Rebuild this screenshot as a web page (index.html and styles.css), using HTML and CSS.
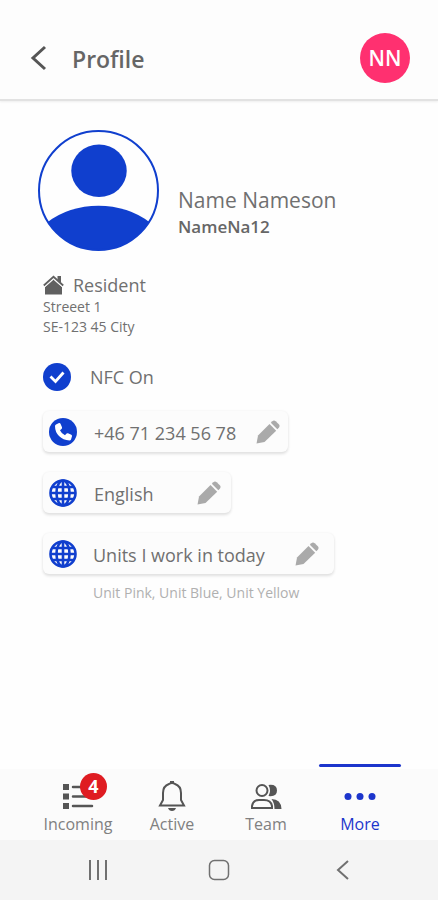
FILE: index.html
```html
<!DOCTYPE html>
<html lang="en">
<head>
<meta charset="utf-8">
<meta name="viewport" content="width=device-width, initial-scale=1">
<title>Profile</title>
<link rel="stylesheet" href="styles.css">
</head>
<body>
<svg class="defs" aria-hidden="true">
  <symbol id="pencil" viewBox="0 0 24 24">
    <path d="M.5 23.500l1.500-8L13.500 4l6.700 6.700L8.500 22z"/>
    <path d="M14.800 2.700l1.500-1.500q1.700-1.500 3.400 0l3.100 3.100q1.500 1.700 0 3.400l-1.500 1.500z"/>
  </symbol>
  <symbol id="globe" viewBox="0 0 28 28">
    <g fill="none" stroke="currentColor" stroke-width="2.600">
      <circle cx="14" cy="14" r="12.500"/>
      <ellipse cx="14" cy="14" rx="6.500" ry="12.500"/>
      <path d="M14 1v26M1 14h26M3 8h22M3 20h22"/>
    </g>
  </symbol>
</svg>

<header class="topbar">
  <button class="plain back" type="button" aria-label="Back">
    <svg width="18" height="26" viewBox="0 0 18 26"><path d="M16 2L4 13l12 11" fill="none" stroke="currentColor" stroke-width="3"/></svg>
  </button>
  <h1 class="title">Profile</h1>
  <span class="initials">NN</span>
</header>

<main class="content">
  <section class="person">
    <svg class="avatar" viewBox="0 0 120 120" aria-hidden="true">
      <clipPath id="round"><circle cx="60" cy="60" r="59"/></clipPath>
      <ellipse cx="60.500" cy="40.500" rx="27.500" ry="26"/>
      <ellipse cx="60" cy="132" rx="72" ry="57" clip-path="url(#round)"/>
      <circle cx="60" cy="60" r="59" fill="none" stroke="currentColor" stroke-width="2"/>
    </svg>
    <div>
      <h2 class="name">Name Nameson</h2>
      <p class="username">NameNa12</p>
    </div>
  </section>

  <section class="address">
    <h3 class="role">
      <svg width="21" height="20" viewBox="0 0 21 20" aria-hidden="true"><path d="M2 12l8.500-7.500L19 12v7.500H2z"/><path d="M.8 10.500l9.700-8.700 9.700 8.700" fill="none" stroke="currentColor" stroke-width="1.800"/><path d="M14.500 1H18v7l-3.500-3z"/><path d="M1.500 12.300l9-8.100 9 8.100" fill="none" stroke="#fff" stroke-width=".7"/></svg>
      Resident
    </h3>
    <p class="line">Streeet 1</p>
    <p class="line">SE-123 45 City</p>
  </section>

  <div class="nfc">
    <svg class="badge-icon" viewBox="0 0 28 28" aria-hidden="true"><circle cx="14" cy="14" r="14"/><path d="M7.500 13.500l5 5L20.500 9.500" fill="none" stroke="#fff" stroke-width="2.800"/></svg>
    <span>NFC On</span>
  </div>

  <div class="card card-phone">
    <svg class="badge-icon" viewBox="0 0 28 28" aria-hidden="true"><circle cx="14" cy="14" r="14"/><path d="M7 6.500L10 5q1-.3 1.500.7l1.500 3.500q.3 1-.5 1.700l-1.500 1.300q1.500 3.500 5 5l1.300-1.500q.7-.8 1.700-.4l3.300 1.500q1 .5.700 1.500L22 21.500q-.4 1-1.500 1Q14 22 10 18T6 8q0-1 1-1.500z" fill="#fff"/></svg>
    <span>+46 71 234 56 78</span>
    <button class="plain edit" type="button" aria-label="Edit phone number"><svg width="24" height="24"><use href="#pencil"/></svg></button>
  </div>

  <div class="card card-language">
    <svg class="badge-icon" aria-hidden="true"><use href="#globe"/></svg>
    <span>English</span>
    <button class="plain edit" type="button" aria-label="Edit language"><svg width="24" height="24"><use href="#pencil"/></svg></button>
  </div>

  <div class="card card-units">
    <svg class="badge-icon" aria-hidden="true"><use href="#globe"/></svg>
    <span>Units I work in today</span>
    <button class="plain edit" type="button" aria-label="Edit units"><svg width="24" height="24"><use href="#pencil"/></svg></button>
  </div>
  <p class="units">Unit Pink, Unit Blue, Unit Yellow</p>
</main>

<nav class="tabs">
  <a class="tab" href="#incoming">
    <span class="tab-icon">
      <svg width="32" height="32" viewBox="0 0 32 32" aria-hidden="true"><path d="M1 4h6v6H1zM1 13.500h6v6H1zM1 23h6v6H1z"/><path d="M11 7h19M11 16.500h19M11 26h19" stroke="currentColor" stroke-width="2.500" stroke-linecap="round"/></svg>
      <span class="count">4</span>
    </span>
    Incoming
  </a>
  <a class="tab" href="#active">
    <span class="tab-icon">
      <svg width="32" height="32" viewBox="0 0 32 32" aria-hidden="true"><path d="M4 25.500h24L25 20v-7q0-7-6-9-3-2-6 0-6 2-6 9v7z" fill="none" stroke="currentColor" stroke-width="2"/><path d="M12 28h8q-1 3-4 3t-4-3zM14 1h4v3h-4z"/></svg>
    </span>
    Active
  </a>
  <a class="tab" href="#team">
    <span class="tab-icon">
      <svg width="32" height="32" viewBox="0 0 32 32" aria-hidden="true"><g fill="none" stroke="currentColor" stroke-width="2"><circle cx="12" cy="10.500" r="5.500"/><path d="M2 28v-2q1-6 7-6h5q7 0 8 6v2z"/></g><path d="M18.500 5q8.500-1 8.500 5.500T18.500 16q3-5.500 0-11zM21.500 19q9.500 0 10 10h-7q0-6-3-10z"/></svg>
    </span>
    Team
  </a>
  <a class="tab tab-current" href="#more" aria-current="page">
    <span class="tab-icon">
      <svg width="32" height="32" viewBox="0 0 32 32" aria-hidden="true"><circle cx="4" cy="16.500" r="3.500"/><circle cx="16" cy="16.500" r="3.500"/><circle cx="28" cy="16.500" r="3.500"/></svg>
    </span>
    More
  </a>
</nav>

<footer class="system">
  <button class="plain" type="button" aria-label="Recent apps"><svg width="22" height="22" viewBox="0 0 22 22"><path d="M3 1v20M11 1v20M19 1v20" stroke="currentColor" stroke-width="2"/></svg></button>
  <button class="plain" type="button" aria-label="Home"><svg width="22" height="22" viewBox="0 0 22 22"><rect x="1.500" y="1.500" width="19" height="19" rx="5" fill="none" stroke="currentColor" stroke-width="1.500"/></svg></button>
  <button class="plain" type="button" aria-label="Go back"><svg width="22" height="22" viewBox="0 0 22 22"><path d="M19 2L9 11l10 9" fill="none" stroke="currentColor" stroke-width="2"/></svg></button>
</footer>
</body>
</html>
```
FILE: styles.css
```css
* {
  box-sizing: border-box;
}

body {
  margin: 0;
  min-height: 100vh;
  display: flex;
  flex-direction: column;
  background: #fefefe;
  color: #707070;
  font: 18px/24px "Open Sans", "Noto Sans", sans-serif;
}

h1, h2, h3, p {
  margin: 0;
  font-weight: 400;
}

svg {
  display: block;
  flex: none;
  fill: currentColor;
}

.defs {
  position: absolute;
  width: 0;
  height: 0;
}

.plain {
  display: flex;
  align-items: center;
  justify-content: center;
  padding: 0;
  border: 0;
  background: none;
  color: inherit;
}

.topbar {
  display: flex;
  align-items: center;
  height: 101px;
  padding: 17px 28px 0;
  background: #fdfdfd;
  border-bottom: 2px solid #e2e2e2;
  box-shadow: 0 1px 2px #eee;
}

.back {
  width: 20px;
  color: #555;
}

.title {
  margin-left: 24px;
  padding-top: 2px;
  color: #666;
  font-size: 23px;
  font-weight: 600;
  line-height: 32px;
}

.initials {
  width: 50px;
  height: 50px;
  margin-left: auto;
  border-radius: 50%;
  background: #ff3070;
  color: #fff;
  font-size: 21px;
  font-weight: 600;
  line-height: 50px;
  text-align: center;
}

.content {
  flex: 1;
  padding: 29px 38px;
}

.person {
  display: flex;
  align-items: flex-end;
  gap: 19px;
}

.avatar {
  width: 121px;
  height: 121px;
  color: #103fce;
}

.person > div {
  padding-bottom: 11px;
}

.name {
  font-size: 21px;
  line-height: 28px;
}

.username {
  color: #666;
  font-size: 17px;
  font-weight: 600;
  line-height: 26px;
}

.address {
  margin: 22px 0 0 5px;
}

.role {
  display: flex;
  align-items: center;
  gap: 9px;
  font-size: 18px;
  line-height: 24px;
}

.role svg {
  color: #606060;
}

.line {
  font-size: 14px;
  line-height: 20px;
}

.nfc {
  display: flex;
  align-items: center;
  gap: 19px;
  margin: 26px 0 0 5px;
}

.badge-icon {
  width: 28px;
  height: 28px;
  color: #103fce;
}

.card {
  display: flex;
  align-items: center;
  gap: 17px;
  max-width: 100%;
  height: 41px;
  margin: 20px 0 0 5px;
  padding: 0 8px 0 6px;
  border-radius: 6px;
  background: #fcfcfc;
  box-shadow: 0 2px 3px #e0e0e0, 0 0 3px #f2f2f2;
}

.card span {
  padding-top: 2px;
}

.card-phone {
  width: 245px;
}

.card-language {
  width: 188px;
  padding-right: 10px;
}

.card-units {
  width: 291px;
  gap: 16px;
  padding-right: 15px;
}

.edit {
  margin-left: auto;
  color: #aaa;
}

.units {
  margin: 9px 0 0 55px;
  color: #b0b0b0;
  font-size: 14px;
  line-height: 20px;
}

.tabs {
  display: flex;
  height: 71px;
  padding: 0 31px;
  background: #fbfbfb;
}

.tab {
  position: relative;
  flex: 1;
  display: flex;
  flex-direction: column;
  align-items: center;
  padding-top: 11px;
  color: #808080;
  font-size: 16px;
  line-height: 24px;
  text-decoration: none;
}

.tab-icon {
  position: relative;
  color: #555;
}

.count {
  position: absolute;
  top: -7px;
  left: 18px;
  width: 27px;
  height: 27px;
  border-radius: 50%;
  background: #df1c22;
  color: #fff;
  font-size: 18px;
  font-weight: 700;
  line-height: 27px;
  text-align: center;
}

.tab-current,
.tab-current .tab-icon {
  color: #1c35cc;
}

.tab-current::before {
  content: "";
  position: absolute;
  top: -5px;
  left: 6px;
  right: 6px;
  height: 3px;
  border-radius: 2px;
  background: #1c35cc;
}

.system {
  display: flex;
  height: 60px;
  padding: 0 37px;
  background: #f4f4f4;
}

.system .plain {
  flex: 1;
}
```
